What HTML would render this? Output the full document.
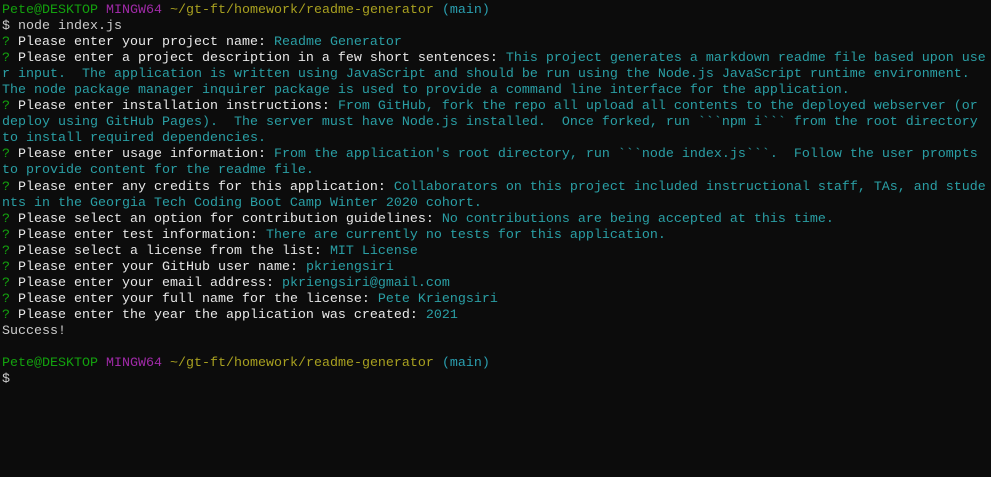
<!DOCTYPE html>
<html><head><meta charset="utf-8"><style>
html,body{margin:0;padding:0;background:#0c0c0c;width:991px;height:477px;overflow:hidden}
pre{margin:0;padding:3px 0 0 2px;font-family:"Liberation Mono",monospace;font-size:13.33px;line-height:16.04px;color:#cccccc;white-space:pre}
.g{color:#13a10e}.m{color:#a02aa8}.y{color:#a8a020}.c{color:#2a9fb0}.a{color:#2a9fa5}.w{color:#e8e8e8}
</style></head><body><pre><span class="g">Pete@DESKTOP</span> <span class="m">MINGW64</span> <span class="y">~/gt-ft/homework/readme-generator</span> <span class="c">(main)</span>
$ node index.js
<span class="g">?</span> <span class="w">Please enter your project name:</span> <span class="a">Readme Generator</span>
<span class="g">?</span> <span class="w">Please enter a project description in a few short sentences:</span> <span class="a">This project generates a markdown readme file based upon use
r input.  The application is written using JavaScript and should be run using the Node.js JavaScript runtime environment.
The node package manager inquirer package is used to provide a command line interface for the application.</span>
<span class="g">?</span> <span class="w">Please enter installation instructions:</span> <span class="a">From GitHub, fork the repo all upload all contents to the deployed webserver (or
deploy using GitHub Pages).  The server must have Node.js installed.  Once forked, run &#96;&#96;&#96;npm i&#96;&#96;&#96; from the root directory
to install required dependencies.</span>
<span class="g">?</span> <span class="w">Please enter usage information:</span> <span class="a">From the application's root directory, run &#96;&#96;&#96;node index.js&#96;&#96;&#96;.  Follow the user prompts
to provide content for the readme file.</span>
<span class="g">?</span> <span class="w">Please enter any credits for this application:</span> <span class="a">Collaborators on this project included instructional staff, TAs, and stude
nts in the Georgia Tech Coding Boot Camp Winter 2020 cohort.</span>
<span class="g">?</span> <span class="w">Please select an option for contribution guidelines:</span> <span class="a">No contributions are being accepted at this time.</span>
<span class="g">?</span> <span class="w">Please enter test information:</span> <span class="a">There are currently no tests for this application.</span>
<span class="g">?</span> <span class="w">Please select a license from the list:</span> <span class="a">MIT License</span>
<span class="g">?</span> <span class="w">Please enter your GitHub user name:</span> <span class="a">pkriengsiri</span>
<span class="g">?</span> <span class="w">Please enter your email address:</span> <span class="a">pkriengsiri@gmail.com</span>
<span class="g">?</span> <span class="w">Please enter your full name for the license:</span> <span class="a">Pete Kriengsiri</span>
<span class="g">?</span> <span class="w">Please enter the year the application was created:</span> <span class="a">2021</span>
Success!

<span class="g">Pete@DESKTOP</span> <span class="m">MINGW64</span> <span class="y">~/gt-ft/homework/readme-generator</span> <span class="c">(main)</span>
$
</pre></body></html>
